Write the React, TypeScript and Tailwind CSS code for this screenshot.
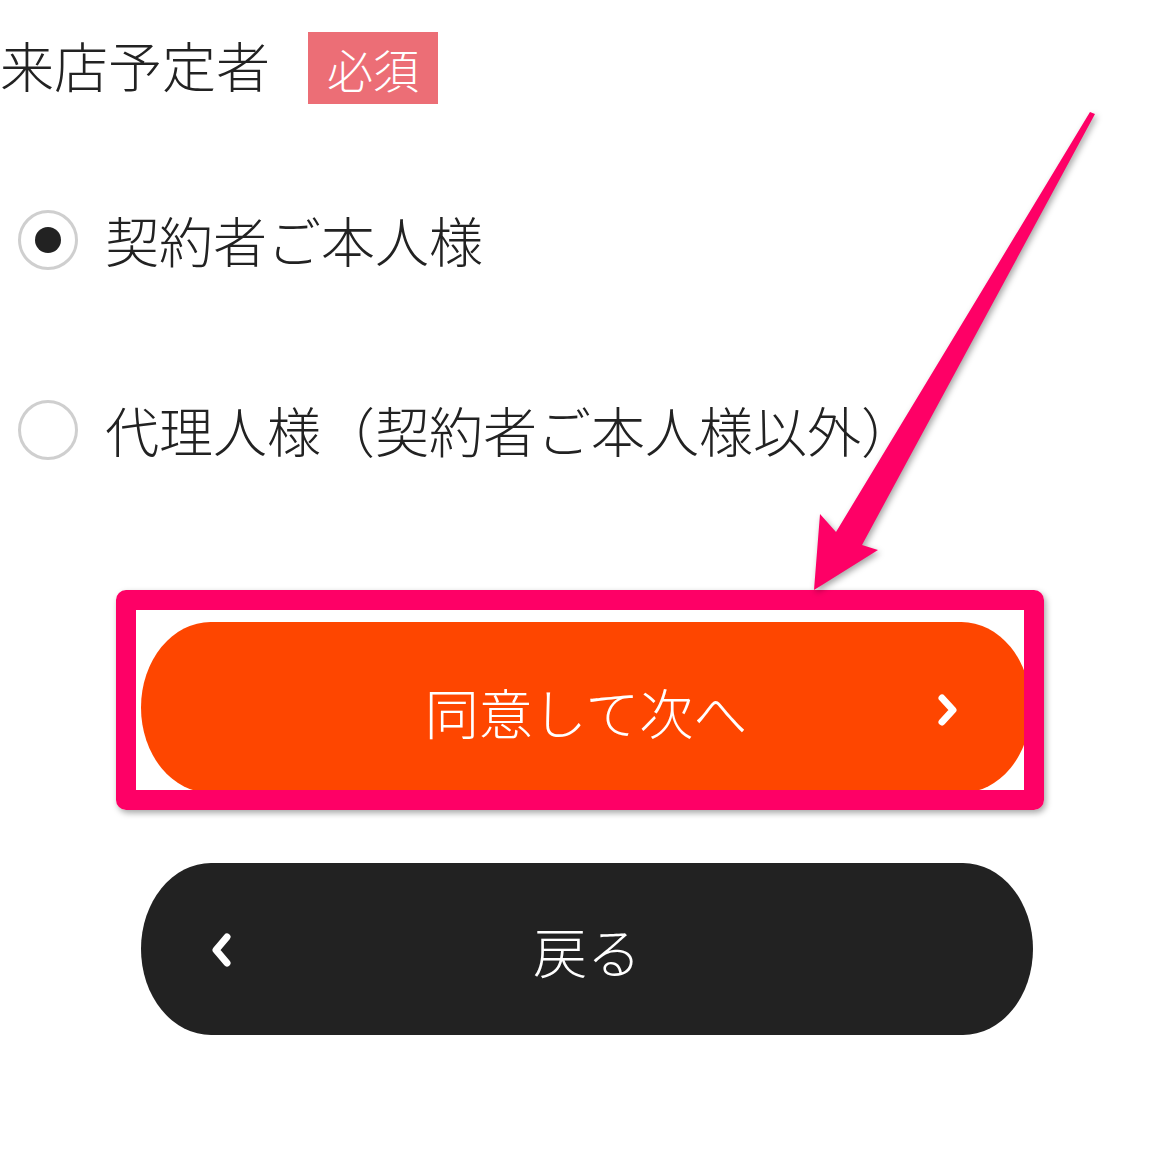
export default function App() {
  return (
    <main
      className="relative w-[1170px] h-[1152px] overflow-hidden bg-white text-[#222222] font-light"
      style={{ fontFamily: '"Noto Sans CJK JP", "Noto Sans", sans-serif' }}
    >
      {/* heading */}
      <div className="flex items-center h-[72px] mt-[32px]">
        <h2 className="text-[54px] leading-none font-light -mt-[6px]">来店予定者</h2>
        <span className="ml-[38px] flex items-center justify-center w-[130px] h-[72px] bg-[#ec6e76] text-white text-[46px] leading-none">
          必須
        </span>
      </div>

      {/* options */}
      <label className="flex items-center h-[100px] mt-[86px]">
        <span className="ml-[18px] flex items-center justify-center w-[60px] h-[60px] rounded-full border-[3px] border-[#cfcfcf] bg-white">
          <span className="w-[26px] h-[26px] rounded-full bg-[#222222]" />
        </span>
        <span className="ml-[27px] text-[54px] leading-none">契約者ご本人様</span>
      </label>
      <label className="flex items-center h-[100px] mt-[90px]">
        <span className="ml-[18px] w-[60px] h-[60px] rounded-full border-[3px] border-[#cfcfcf] bg-white" />
        <span className="ml-[27px] text-[54px] leading-none">代理人様（契約者ご本人様以外）</span>
      </label>

      {/* buttons */}
      <div className="flex flex-col ml-[141px] mt-[142px] gap-[70px]">
        <button className="relative flex items-center justify-center w-[890px] h-[171px] rounded-[70px/86px] bg-[#fe4600] text-white text-[54px] leading-none font-light">
          <span className="mt-[8px]">同意して次へ</span>
          <svg className="absolute right-[70px] top-[70px]" width="28" height="36" viewBox="0 0 28 36">
            <polyline points="9,6 20,18 9,30" fill="none" stroke="white" strokeWidth="7" strokeLinecap="round" strokeLinejoin="round" />
          </svg>
        </button>
        <button className="relative flex items-center justify-center w-[892px] h-[172px] rounded-[70px/86px] bg-[#222222] text-white text-[54px] leading-none font-light">
          <span className="mt-[4px]">戻る</span>
          <svg className="absolute left-[67px] top-[68px]" width="28" height="38" viewBox="0 0 28 38">
            <polyline points="19,6 8,19 19,32" fill="none" stroke="white" strokeWidth="7" strokeLinecap="round" strokeLinejoin="round" />
          </svg>
        </button>
      </div>

      {/* annotation: highlight box */}
      <div className="absolute left-[116px] top-[590px] w-[928px] h-[220px] rounded-[10px] border-[20px] border-[#fe0066] shadow-[2px_3px_6px_rgba(0,0,0,0.35)] pointer-events-none" />

      {/* annotation: arrow */}
      <svg
        className="absolute left-0 top-0 pointer-events-none"
        width="1170"
        height="1152"
        viewBox="0 0 1170 1152"
        style={{ filter: "drop-shadow(2px 3px 3px rgba(0,0,0,0.35))" }}
      >
        <polygon
          points="1090,112 1095,114 862,545 878,550 814,590 820,514 836,532"
          fill="#fe0066"
        />
      </svg>
    </main>
  );
}
